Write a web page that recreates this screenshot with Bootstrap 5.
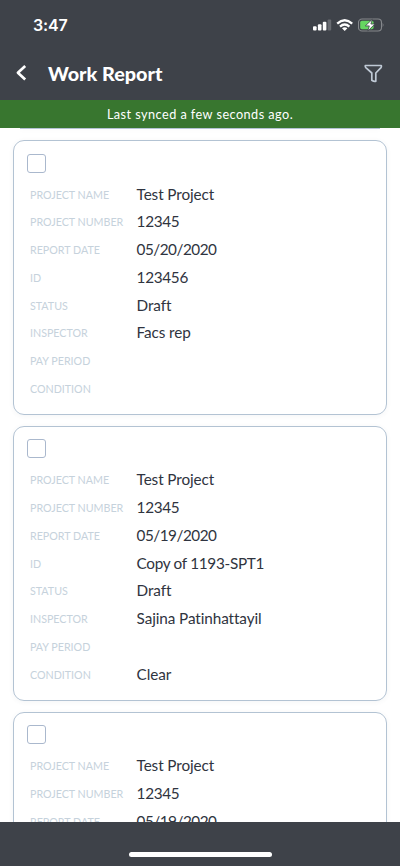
<!DOCTYPE html>
<html lang="en">
<head>
<meta charset="utf-8">
<meta name="viewport" content="width=device-width, initial-scale=1">
<title>Work Report</title>
<link href="https://cdn.jsdelivr.net/npm/bootstrap@5.3.0/dist/css/bootstrap.min.css" rel="stylesheet">
<style>
body { font-family: Lato, sans-serif; color: #2f3440; height: 866px; }
.chrome { background: #3e4249; }
.status { height: 47px; padding: 2px 15px 0 33px; }
.clock { font: 600 16px/1 Inter, sans-serif; letter-spacing: -.15px; }
.titlebar { height: 53px; padding: 0 17px 0 15px; }
.titlebar h1 { font-size: 19.8px; font-weight: 900; line-height: 1; margin-left: 21px; }
.sync { height: 28px; background: #38762f; font-size: 12.7px; letter-spacing: .45px; padding-top: 1px; }
.reports { min-height: 0; padding: 0 13px; gap: 11px; }
.report { height: 274.8px; border: 1px solid #b3c3d3; border-radius: 11px; padding: 12.6px 13.4px 0; box-shadow: 0 1px 5px rgba(60, 80, 100, .06); }
.report-above { height: 1px; border-color: #b3c3d3; border-radius: 0; margin: 0 7px; padding: 0; border-width: 1px 0 0; }
.report .form-check-input { width: 19px; height: 19px; border-color: #aab8cd; border-radius: 3px; }
.fields { padding: 7.2px 0 0 2.6px; }
.fields > div { height: 27.75px; }
.fields dt { width: 106.6px; font-size: 10.7px; font-weight: 400; color: #c6d2dc; padding-top: 2px; }
.fields dd { font-size: 15.3px; line-height: 20px; letter-spacing: -.1px; font-variant-ligatures: none; }
.fields .digits { letter-spacing: -.3px; }
.fields .date { letter-spacing: -.5px; }
.homebar { height: 44px; }
.homebar span { width: 143px; height: 5px; margin-bottom: 9px; }
</style>
</head>
<body class="d-flex flex-column overflow-hidden bg-white">
<header class="chrome text-white flex-shrink-0">
  <div class="status d-flex align-items-center justify-content-between">
    <span class="clock">3:47</span>
    <div class="d-flex align-items-center">
      <svg width="19" height="12" viewBox="0 0 19 12" fill="#fff"><rect y="7.3" width="3.6" height="4.2" rx="1"/><rect x="4.9" y="5.3" width="3.6" height="6.2" rx="1"/><rect x="9.8" y="2.8" width="3.6" height="8.7" rx="1"/><rect x="14.6" y=".5" width="3.6" height="11" rx="1" opacity=".22"/></svg>
      <svg class="ms-1" width="18" height="12" viewBox="0 0 18 12" fill="none" stroke="#fff" stroke-width="2.3"><path d="M1.2 4.6Q8.7-2 16.2 4.6M4 7.6Q8.7 3.4 13.4 7.6"/><path d="M6 9.3Q8.7 7 11.4 9.3L8.7 11.9Z" fill="#fff" stroke="none"/></svg>
      <svg class="ms-1" width="27" height="14" viewBox="0.5 0 27 14"><rect x="1" y="1" width="23" height="12" rx="3.5" fill="none" stroke="#85888c" stroke-width="1.1"/><path d="M25.2 4.8q1.7 2.2 0 4.4z" fill="#85888c"/><rect x="2.7" y="2.7" width="13.4" height="8.6" rx="1.8" fill="#65d660"/><path d="M14.9 1.2 7.8 7.9h4l-1.5 5.2L17.4 6h-4z" fill="#fff" stroke="#3e4249" stroke-width=".8"/></svg>
    </div>
  </div>
  <div class="titlebar d-flex align-items-center">
    <svg width="12" height="18" viewBox="0 0 12 18" fill="none" stroke="#fff" stroke-width="2.7" stroke-linejoin="round"><path d="M10.2 1 2.9 7.7l7.3 6.7"/></svg>
    <h1 class="mb-0">Work Report</h1>
    <svg class="ms-auto" width="19" height="19" viewBox="0 0 19 19" fill="none" stroke="#bfc9d5" stroke-width="1.7" stroke-linejoin="round"><path d="M1.3 1.5h16q.4 1.3-.3 2.1L11.8 9v8.2q-1.5.8-4-1V9L1.8 3.6q-.8-.8-.5-2.1Z"/></svg>
  </div>
</header>
<div class="sync d-flex align-items-center justify-content-center text-white flex-shrink-0">Last synced a few seconds ago.</div>
<main class="reports d-flex flex-column flex-grow-1 overflow-hidden">
  <div class="report report-above flex-shrink-0"></div>
  <article class="report flex-shrink-0">
    <input class="form-check-input d-block m-0" type="checkbox" aria-label="Select report">
    <dl class="fields mb-0">
      <div class="d-flex align-items-center"><dt>PROJECT NAME</dt><dd class="mb-0">Test Project</dd></div>
      <div class="d-flex align-items-center"><dt>PROJECT NUMBER</dt><dd class="mb-0 digits">12345</dd></div>
      <div class="d-flex align-items-center"><dt>REPORT DATE</dt><dd class="mb-0 date">05/20/2020</dd></div>
      <div class="d-flex align-items-center"><dt>ID</dt><dd class="mb-0 digits">123456</dd></div>
      <div class="d-flex align-items-center"><dt>STATUS</dt><dd class="mb-0">Draft</dd></div>
      <div class="d-flex align-items-center"><dt>INSPECTOR</dt><dd class="mb-0">Facs rep</dd></div>
      <div class="d-flex align-items-center"><dt>PAY PERIOD</dt><dd class="mb-0"></dd></div>
      <div class="d-flex align-items-center"><dt>CONDITION</dt><dd class="mb-0"></dd></div>
    </dl>
  </article>
  <article class="report flex-shrink-0">
    <input class="form-check-input d-block m-0" type="checkbox" aria-label="Select report">
    <dl class="fields mb-0">
      <div class="d-flex align-items-center"><dt>PROJECT NAME</dt><dd class="mb-0">Test Project</dd></div>
      <div class="d-flex align-items-center"><dt>PROJECT NUMBER</dt><dd class="mb-0 digits">12345</dd></div>
      <div class="d-flex align-items-center"><dt>REPORT DATE</dt><dd class="mb-0 date">05/19/2020</dd></div>
      <div class="d-flex align-items-center"><dt>ID</dt><dd class="mb-0 digits">Copy of 1193-SPT1</dd></div>
      <div class="d-flex align-items-center"><dt>STATUS</dt><dd class="mb-0">Draft</dd></div>
      <div class="d-flex align-items-center"><dt>INSPECTOR</dt><dd class="mb-0">Sajina Patinhattayil</dd></div>
      <div class="d-flex align-items-center"><dt>PAY PERIOD</dt><dd class="mb-0"></dd></div>
      <div class="d-flex align-items-center"><dt>CONDITION</dt><dd class="mb-0">Clear</dd></div>
    </dl>
  </article>
  <article class="report flex-shrink-0">
    <input class="form-check-input d-block m-0" type="checkbox" aria-label="Select report">
    <dl class="fields mb-0">
      <div class="d-flex align-items-center"><dt>PROJECT NAME</dt><dd class="mb-0">Test Project</dd></div>
      <div class="d-flex align-items-center"><dt>PROJECT NUMBER</dt><dd class="mb-0 digits">12345</dd></div>
      <div class="d-flex align-items-center"><dt>REPORT DATE</dt><dd class="mb-0 date">05/19/2020</dd></div>
    </dl>
  </article>
</main>
<footer class="chrome homebar d-flex justify-content-center align-items-end flex-shrink-0"><span class="bg-white rounded-pill"></span></footer>
<script src="https://cdn.jsdelivr.net/npm/bootstrap@5.3.0/dist/js/bootstrap.bundle.min.js"></script>
</body>
</html>
